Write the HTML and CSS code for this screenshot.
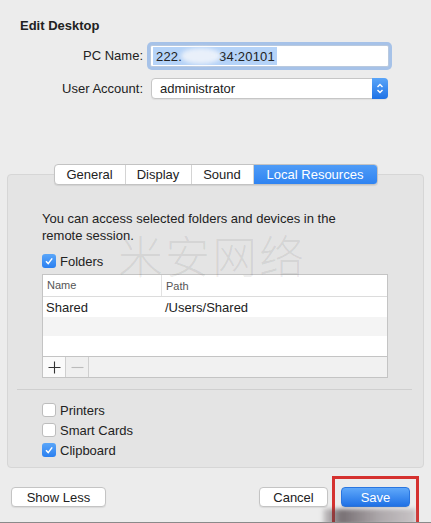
FILE: index.html
```html
<!DOCTYPE html>
<html lang="en">
<head>
  <meta charset="UTF-8" />
  <meta name="viewport" content="width=device-width, initial-scale=1.0"/>
  <title>Edit Desktop</title>
  <link rel="stylesheet" href="styles.css">
</head>
<body>

<div class="window">
  <h1 class="title">Edit Desktop</h1>

  <div class="form">
    <label class="form-label">PC Name:</label>
    <div class="field focused">
      <span class="selection">222.<span class="blur"></span>34:20101</span>
    </div>

    <label class="form-label">User Account:</label>
    <div class="select">
      <span>administrator</span>
      <span class="stepper">
        <svg width="8" height="13" viewBox="0 0 8 13">
          <path d="M1.5 5 L4 2.5 L6.5 5" fill="none" stroke="#fff" stroke-width="1.4"/>
          <path d="M1.5 8 L4 10.5 L6.5 8" fill="none" stroke="#fff" stroke-width="1.4"/>
        </svg>
      </span>
    </div>
  </div>

  <div class="panel">
    <div class="tabs">
      <span class="tab t-general">General</span>
      <span class="tab t-display">Display</span>
      <span class="tab t-sound">Sound</span>
      <span class="tab t-local active">Local Resources</span>
    </div>

    <div class="panel-body">
      <p class="note">You can access selected folders and devices in the remote session.</p>

      <div class="check on first">
        <span class="box"><svg width="10" height="10" viewBox="0 0 10 10"><path d="M2 5.2 L4.2 7.6 L8.2 2.4" fill="none" stroke="#fff" stroke-width="1.5"/></svg></span>
        Folders
      </div>

      <div class="table">
        <div class="row head">
          <span class="col-name">Name</span>
          <span class="col-path">Path</span>
        </div>
        <div class="row r1">
          <span class="col-name">Shared</span>
          <span class="col-path">/Users/Shared</span>
        </div>
        <div class="row r2 stripe"></div>
        <div class="row r3"></div>
        <div class="table-foot">
          <span class="tb-btn">
            <svg width="13" height="13" viewBox="0 0 13 13"><path d="M6.5 0.5 V12.5 M0.5 6.5 H12.5" stroke="#333" stroke-width="1.1"/></svg>
          </span>
          <span class="tb-btn disabled">
            <svg width="13" height="13" viewBox="0 0 13 13"><path d="M0.5 6.5 H12.5" stroke="#bbb" stroke-width="1.1"/></svg>
          </span>
        </div>
      </div>

      <div class="separator"></div>

      <div class="check"><span class="box"></span>Printers</div>
      <div class="check"><span class="box"></span>Smart Cards</div>
      <div class="check on">
        <span class="box"><svg width="10" height="10" viewBox="0 0 10 10"><path d="M2 5.2 L4.2 7.6 L8.2 2.4" fill="none" stroke="#fff" stroke-width="1.5"/></svg></span>
        Clipboard
      </div>
    </div>

    <div class="watermark">米安网络</div>
  </div>

  <div class="actions">
    <button class="btn show-less">Show Less</button>
    <div class="spacer"></div>
    <button class="btn cancel">Cancel</button>
    <div class="save-wrap">
      <button class="btn primary">Save</button>
      <div class="highlight"></div>
      <div class="smudge"></div>
    </div>
  </div>
</div>

</body>
</html>
```

FILE: styles.css
```css
body {
  font-family: "Liberation Sans", Arial, sans-serif;
  font-size: 13px;
  color: #222;
  background: #ececec;
  margin: 0;
  padding: 0;
}
.window {
  position: relative;
  width: 431px;
  height: 522px;
  background: #ececec;
  border-bottom: 1px solid #8a8a8a;
  overflow: hidden;
}
.title {
  margin: 0;
  padding: 18px 0 0 20px;
  font-size: 13px;
  line-height: 16px;
  font-weight: bold;
}

/* form */
.form {
  display: grid;
  grid-template-columns: 143px 239px;
  grid-template-rows: 22px 21px;
  column-gap: 7px;
  row-gap: 11px;
  margin-top: 11px;
}
.form-label {
  text-align: right;
  line-height: 22px;
}
.field {
  background: #fff;
  border: 1px solid #b9c9de;
  box-sizing: border-box;
  display: flex;
  align-items: center;
  padding-left: 2px;
}
.field.focused {
  box-shadow: 0 0 0 3px rgba(110, 160, 230, 0.55);
  border-radius: 2px;
}
.selection {
  display: inline-flex;
  align-items: center;
  background: #b5d3f8;
  height: 18px;
  padding: 0 2px 0 3px;
  letter-spacing: 0.2px;
}
.blur {
  display: inline-block;
  width: 40px;
  height: 16px;
  margin: 0 -2px 0 -1px;
  border-radius: 50%;
  background: #e9f0fa;
  filter: blur(2px);
}
.select {
  position: relative;
  margin-left: 1px;
  width: 237px;
  background: #fff;
  border: 1px solid #c6c6c6;
  border-radius: 4px;
  box-sizing: border-box;
  display: flex;
  align-items: center;
  padding-left: 8px;
  box-shadow: 0 1px 1px rgba(0, 0, 0, 0.06);
}
.stepper {
  position: absolute;
  right: -1px;
  top: -1px;
  bottom: -1px;
  width: 16px;
  border-radius: 0 4px 4px 0;
  background: linear-gradient(#5aa5f8, #1e72e6);
  display: flex;
  align-items: center;
  justify-content: center;
}

/* tab panel */
.panel {
  position: relative;
  margin: 75px 7px 0 7px;
  height: 294px;
  box-sizing: border-box;
  border: 1px solid #d6d6d6;
  border-radius: 4px;
  background: #e4e4e4;
}
.tabs {
  display: flex;
  width: 324px;
  height: 21px;
  margin: -11px auto 0 auto;
  box-sizing: border-box;
  border: 1px solid #c3c3c3;
  border-radius: 4px;
  background: #fff;
  overflow: hidden;
  box-shadow: 0 1px 1px rgba(0, 0, 0, 0.08);
}
.tab {
  text-align: center;
  line-height: 19px;
  border-right: 1px solid #d4d4d4;
}
.t-general { width: 70px; }
.t-display { width: 65px; }
.t-sound { width: 61px; }
.t-local {
  flex: 1;
  border-right: none;
}
.tab.active {
  background: linear-gradient(#4f9cf7, #2f83f1);
  color: #fff;
}
.panel-body {
  padding: 0 35px 0 34px;
}
.note {
  margin: 25px 0 0 0;
  max-width: 312px;
  line-height: 17px;
}
.check {
  display: flex;
  align-items: center;
  height: 20px;
}
.check.first {
  margin-top: 7px;
}
.box {
  width: 14px;
  height: 14px;
  box-sizing: border-box;
  border: 1px solid #bdbdbd;
  border-radius: 3px;
  background: #fff;
  margin-right: 4px;
  display: flex;
  align-items: center;
  justify-content: center;
}
.check.on .box {
  border: none;
  background: linear-gradient(#5aa6f9, #2a7ff0);
}

/* table */
.table {
  margin-top: 3px;
  border: 1px solid #c4c4c4;
  background: #fff;
}
.row {
  display: flex;
  height: 20px;
  align-items: center;
}
.row.head {
  height: 21px;
  border-bottom: 1px solid #dcdcdc;
  font-size: 11px;
  color: #555;
}
.row.head .col-name {
  padding-left: 4px;
  border-right: 1px solid #e2e2e2;
  height: 21px;
  line-height: 21px;
}
.row.head .col-path {
  padding-left: 4px;
}
.col-name {
  width: 114px;
  padding-left: 3px;
}
.col-path {
  padding-left: 5px;
}
.row.r2 {
  height: 19px;
}
.stripe {
  background: #f4f4f4;
}
.table-foot {
  display: flex;
  height: 20px;
  border-top: 1px solid #c4c4c4;
  background: #f1f1f1;
}
.tb-btn {
  width: 22px;
  display: flex;
  align-items: center;
  justify-content: center;
  border-right: 1px solid #cfcfcf;
  background: #fafafa;
}
.tb-btn.disabled {
  background: #efefef;
}
.separator {
  height: 1px;
  background: #cfcfcf;
  margin: 11px -24px 10px -25px;
}
.watermark {
  position: absolute;
  left: 110px;
  top: 57px;
  font-family: "Noto Sans CJK SC", sans-serif;
  font-size: 45px;
  font-weight: 300;
  line-height: 1;
  letter-spacing: 2px;
  color: rgba(0, 0, 0, 0.07);
  pointer-events: none;
}

/* bottom buttons */
.actions {
  display: flex;
  align-items: center;
  margin-top: 19px;
  padding: 0 21px 0 11px;
}
.spacer {
  flex: 1;
}
.btn {
  font-family: "Liberation Sans", Arial, sans-serif;
  font-size: 13px;
  height: 20px;
  padding: 0;
  background: #fff;
  color: #222;
  border: 1px solid #c4c4c4;
  border-radius: 4px;
  box-shadow: 0 1px 1px rgba(0, 0, 0, 0.08);
}
.show-less {
  width: 95px;
}
.cancel {
  width: 69px;
}
.save-wrap {
  position: relative;
  margin-left: 13px;
}
.primary {
  display: block;
  width: 69px;
  color: #fff;
  border: 1px solid #2a76e0;
  background: linear-gradient(#5fa8fa, #1f71e6);
}
.highlight {
  position: absolute;
  left: -9px;
  right: -9px;
  top: -11px;
  bottom: -17px;
  border: 3px solid #d5312f;
  border-bottom: none;
}
.smudge {
  position: absolute;
  left: -18px;
  right: -6px;
  top: 22px;
  height: 16px;
  background: linear-gradient(90deg, rgba(80, 70, 75, 0.2), rgba(80, 70, 75, 0.75) 20%, rgba(120, 110, 115, 0.55) 60%, rgba(150, 140, 145, 0.4));
  filter: blur(2px);
}
```
